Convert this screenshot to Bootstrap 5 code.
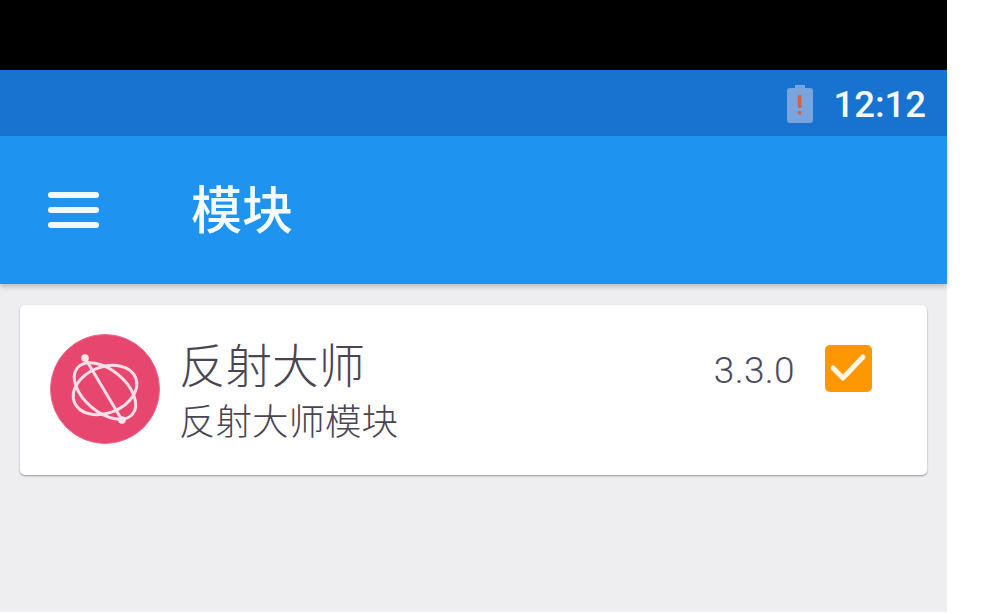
<!DOCTYPE html>
<html lang="zh">
<head>
  <meta charset="UTF-8">
  <title>模块</title>
  <link href="https://cdn.jsdelivr.net/npm/bootstrap@5.3.0/dist/css/bootstrap.min.css" rel="stylesheet">
  <style>
    html, body { height: 100%; }
    body { background: #fff; font-family: Roboto, "Noto Sans CJK SC", sans-serif; overflow: hidden; }
    .phone { width: 947px; height: 612px; background: #eeeef0; }
    .top-black { height: 70px; background: #000; }
    .status-bar { height: 66px; background: #1873d0; padding-right: 21px; padding-top: 2px; }
    .clock { font-size: 36.5px; font-weight: 500; line-height: 1; color: #f2f8fd; margin-left: 20px; margin-top: 3px; }
    .tool-bar { height: 148px; background: #1f93f0; box-shadow: 0 3px 5px rgba(0,0,0,.2); padding-left: 48px; position: relative; }
    .burger { width: 51px; height: 36px; margin-top: -1px; }
    .page-title { font-size: 51px; font-weight: 500; line-height: 1; color: #f4faff; margin-left: 92px; margin-top: 3px; }
    .module-box { height: 170px; margin: 21px 20px 0 20px; background: #fff; border-radius: 5px; box-shadow: 0 1px 2px rgba(0,0,0,.38); padding: 29px 55px 0 30px; }
    .app-icon { width: 110px; height: 110px; flex: none; }
    .app-texts { margin-left: 19px; color: #4b4453; font-family: "Noto Sans CJK SC", sans-serif; font-weight: 300; }
    .app-name { font-size: 46.5px; line-height: 58px; }
    .app-desc { font-size: 36.5px; line-height: 56px; }
    .app-ver { font-size: 37px; font-weight: 300; color: #4b4860; line-height: 1; margin-top: 18px; letter-spacing: .4px; }
    .app-check { width: 47px; height: 47px; flex: none; margin-left: 30px; margin-top: 11px; }
  </style>
</head>
<body>
  <div class="phone">
    <div class="top-black"></div>
    <div class="status-bar d-flex align-items-center justify-content-end">
      <svg width="26" height="38" viewBox="0 0 26 38">
        <path d="M8 0h10v3h5a3 3 0 0 1 3 3v29a3 3 0 0 1-3 3H3a3 3 0 0 1-3-3V6a3 3 0 0 1 3-3h5z" fill="#78a5de"/>
        <rect x="10.8" y="10" width="3.6" height="13" rx="1" fill="#d9603f"/>
        <rect x="10.8" y="26" width="3.6" height="3.6" rx="1" fill="#d9603f"/>
      </svg>
      <span class="clock">12:12</span>
    </div>
    <div class="tool-bar d-flex align-items-center">
      <svg class="burger" viewBox="0 0 51 36">
        <g fill="#f2f9fe">
          <rect y="0" width="51" height="6" rx="3"/>
          <rect y="15" width="51" height="6" rx="3"/>
          <rect y="30" width="51" height="6" rx="3"/>
        </g>
      </svg>
      <span class="page-title">模块</span>
    </div>
    <div class="module-box d-flex">
      <svg class="app-icon" viewBox="0 0 110 110">
        <circle cx="55" cy="55" r="54.5" fill="#e7476f" stroke="#ec6a8b"/>
        <g fill="none" stroke="#fbdfe8" stroke-width="3">
          <ellipse cx="55" cy="57" rx="36" ry="21" transform="rotate(40 55 57)"/>
          <ellipse cx="55" cy="56" rx="33" ry="23" transform="rotate(-22 55 56)"/>
          <path d="M35 24L72 86"/>
        </g>
        <circle cx="35" cy="24" r="3.8" fill="#fbe6ed"/>
        <circle cx="72" cy="86" r="3.8" fill="#fbe6ed"/>
      </svg>
      <div class="app-texts">
        <div class="app-name">反射大师</div>
        <div class="app-desc">反射大师模块</div>
      </div>
      <div class="app-ver ms-auto">3.3.0</div>
      <svg class="app-check" viewBox="0 0 47 47">
        <rect width="47" height="47" rx="5" fill="#ff9800"/>
        <path d="M8 23l10 10L38 12" fill="none" stroke="#fff6e6" stroke-width="5" stroke-linecap="round" stroke-linejoin="round"/>
      </svg>
    </div>
  </div>
  <script src="https://cdn.jsdelivr.net/npm/bootstrap@5.3.0/dist/js/bootstrap.bundle.min.js"></script>
</body>
</html>
